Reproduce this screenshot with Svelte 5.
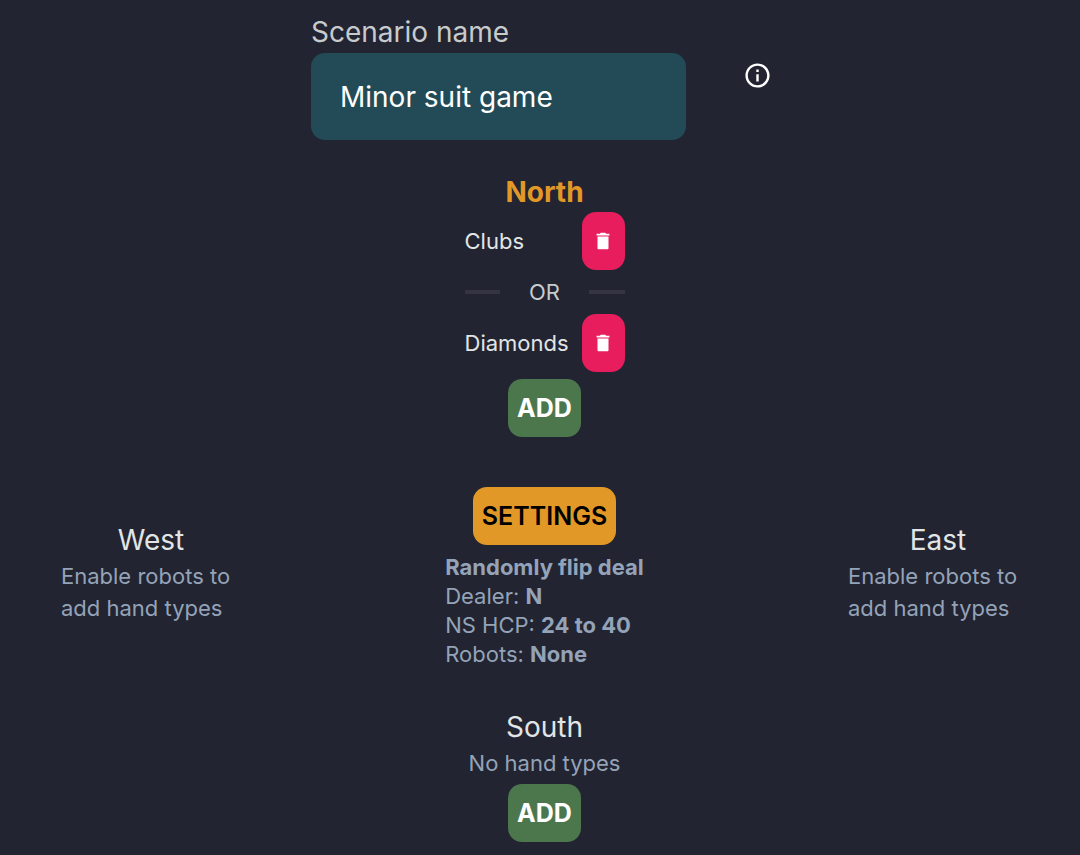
<script>
  let name = $state('Minor suit game');
  let north = $state(['Clubs', 'Diamonds']);
  const facts = [
    ['Dealer', 'N'],
    ['NS HCP', '24 to 40'],
    ['Robots', 'None']
  ];
  const remove = (type) => (north = north.filter((t) => t !== type));
</script>

{#snippet robotSeat(title)}
  <section class="seat side">
    <h2>{title}</h2>
    <p class="note">Enable robots to add hand types</p>
  </section>
{/snippet}

<main>
  <header>
    <div class="field">
      <label for="scenario">Scenario name</label>
      <input id="scenario" type="text" bind:value={name} />
    </div>
    <button class="info" aria-label="Information">
      <svg viewBox="0 0 24 24" fill="currentColor" aria-hidden="true">
        <path d="M11 7h2v2h-2zm0 4h2v6h-2zm1-9C6.480 2 2 6.480 2 12s4.480 10 10 10 10-4.480 10-10S17.520 2 12 2zm0 18c-4.410 0-8-3.590-8-8s3.590-8 8-8 8 3.590 8 8-3.590 8-8 8z" />
      </svg>
    </button>
  </header>

  <section class="seat">
    <h2 class="active">North</h2>
    <div class="types">
      {#each north as type, i}
        {#if i > 0}
          <div class="divider">OR</div>
        {/if}
        <div class="type">
          <span>{type}</span>
          <button class="btn delete" aria-label="Delete {type}" onclick={() => remove(type)}>
            <svg viewBox="0 0 24 24" fill="currentColor" aria-hidden="true">
              <path d="M6 20q0 1 1 1h10q1 0 1-1V7H6zM19 4h-3.500l-1-1h-5l-1 1H5v2h14z" />
            </svg>
          </button>
        </div>
      {/each}
    </div>
    <button class="btn add">ADD</button>
  </section>

  <div class="table">
    {@render robotSeat('West')}
    <section class="settings">
      <button class="btn set">SETTINGS</button>
      <div class="facts">
        <strong>Randomly flip deal</strong>
        {#each facts as [key, value]}
          <div>{key}: <strong>{value}</strong></div>
        {/each}
      </div>
    </section>
    {@render robotSeat('East')}
  </div>

  <section class="seat south">
    <h2>South</h2>
    <p class="note">No hand types</p>
    <button class="btn add">ADD</button>
  </section>
</main>

<style>
  :global(body) {
    margin: 0;
    background: #222431;
  }
  main {
    box-sizing: border-box;
    padding: 12px 52px 14px 61px;
    color: #e2e5e5;
    font: 22px/32px Inter, "Liberation Sans", sans-serif;
  }
  header {
    display: flex;
    justify-content: center;
    align-items: center;
    gap: 57px;
    margin-bottom: 32px;
    padding-right: 6px;
  }
  .field {
    display: flex;
    flex-direction: column;
    width: 375px;
  }
  label {
    color: #c8cbcc;
    font-size: 28px;
    line-height: 41px;
  }
  input {
    box-sizing: border-box;
    width: 100%;
    height: 87px;
    padding: 0 29px;
    border: 0;
    border-radius: 14px;
    background: #234b57;
    color: #fff;
    font: inherit;
    font-size: 28px;
  }
  button {
    border: 0;
    cursor: pointer;
    font: inherit;
  }
  .info {
    display: flex;
    padding: 0 0 2px;
    background: none;
    color: #fff;
  }
  .info svg {
    width: 29px;
    height: 29px;
  }
  .seat {
    display: flex;
    flex-direction: column;
    align-items: center;
  }
  h2 {
    margin: 0;
    font-size: 28px;
    font-weight: 400;
    line-height: 40px;
  }
  .active {
    color: #e29827;
    font-weight: 700;
  }
  .types {
    width: 160px;
    margin-bottom: 7px;
  }
  .type {
    display: flex;
    justify-content: space-between;
    align-items: center;
  }
  .divider {
    display: flex;
    align-items: center;
    gap: 29px;
    height: 44px;
    color: #c8cbcc;
  }
  .divider::before,
  .divider::after {
    content: "";
    flex: 1;
    height: 4px;
    background: #343540;
  }
  .btn {
    display: flex;
    justify-content: center;
    align-items: center;
    height: 58px;
    padding: 0 9px;
    border-radius: 14px;
    color: #fff;
    font-size: 25px;
    font-weight: 700;
  }
  .delete {
    width: 43px;
    background: #e71d5d;
  }
  .delete svg {
    flex: none;
    width: 22px;
    height: 22px;
  }
  .add {
    background: #4c774d;
  }
  .set {
    background: #e29827;
    color: #000;
    font-weight: 600;
  }
  .table {
    display: grid;
    grid-template-columns: 180px 1fr 180px;
    align-items: center;
    margin: 50px 0 38px;
  }
  .side {
    padding-bottom: 12px;
  }
  .note {
    margin: 0;
    color: #94a3b8;
  }
  .south .note {
    margin-bottom: 5px;
  }
  .settings {
    display: flex;
    flex-direction: column;
    align-items: center;
    gap: 8px;
  }
  .facts {
    color: #94a3b8;
    line-height: 29px;
  }
</style>
